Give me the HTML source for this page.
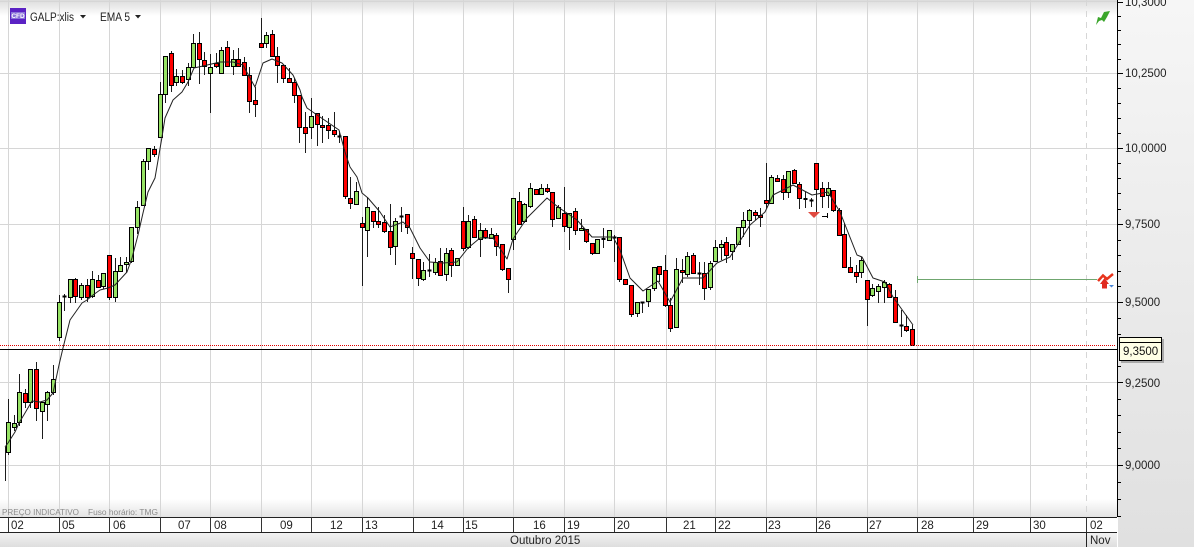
<!DOCTYPE html>
<html><head><meta charset="utf-8"><style>
html,body{margin:0;padding:0;background:#fff;width:1194px;height:547px;overflow:hidden}
svg{display:block;font-family:"Liberation Sans",sans-serif}
</style></head><body>
<svg width="1194" height="547" viewBox="0 0 1194 547" xmlns="http://www.w3.org/2000/svg">
<defs>
<linearGradient id="t" x1="0" y1="0" x2="0" y2="1"><stop offset="0" stop-color="#dcdcdc"/><stop offset="1" stop-color="#fff"/></linearGradient>
<linearGradient id="b" x1="0" y1="0" x2="0" y2="1"><stop offset="0" stop-color="#fff"/><stop offset="1" stop-color="#e4e4e4"/></linearGradient>
<linearGradient id="a" x1="0" y1="0" x2="0" y2="1"><stop offset="0" stop-color="#f6f6f6"/><stop offset="1" stop-color="#e0e0e0"/></linearGradient>
<linearGradient id="m" x1="0" y1="0" x2="0" y2="1"><stop offset="0" stop-color="#f2f2f2"/><stop offset="1" stop-color="#dedede"/></linearGradient>
</defs>
<rect width="1194" height="547" fill="#fff"/>
<rect x="1118" width="76" height="547" fill="url(#a)"/>
<rect width="1117" height="16" fill="url(#t)"/>
<rect y="499" width="1117" height="18" fill="url(#b)"/>
<g stroke="#d6d6d6" stroke-width="1" fill="none">
<path d="M0 1.5H1117M0 73.5H1117M0 148.5H1117M0 224.5H1117M0 302.5H1117M0 382.5H1117M0 465.5H1117"/>
<path d="M8.5 0V517M59.5 0V517M109.5 0V517M160.5 0V517M210.5 0V517M261.5 0V517M311.5 0V517M362.5 0V517M413.5 0V517M463.5 0V517M513.5 0V517M564.5 0V517M614.5 0V517M666.5 0V517M715.5 0V517M766.5 0V517M816.5 0V517M867.5 0V517M917.5 0V517M973.5 0V517M1030.5 0V517"/>
<path d="M1086.5 0V517" stroke-dasharray="6 5"/>
</g>
<path fill="none" stroke="#1c1c1c" stroke-width="1" d="M8.5 399V455M5.5 447V481M14.5 415V431M19.5 374V426M25.5 389V408M30.5 369V408M36.5 362V421M42.5 402V439M47.5 391V421M53.5 365V395M59.5 295V341M64.5 294V311M70.5 279V303M75.5 278V303M81.5 283V300M87.5 279V302M92.5 271V298M98.5 275V287M103.5 273V289M109.5 255V300M115.5 258V302M120.5 257V271M126.5 257V273M131.5 227V263M137.5 201V234M143.5 159V205M148.5 148V170M154.5 146V157M160.5 82V137M165.5 56V103M171.5 51V92M176.5 69V86M182.5 70V84M188.5 63V86M193.5 34V67M199.5 32V84M204.5 52V75M210.5 54V113M216.5 53V68M221.5 47V73M227.5 41V67M233.5 50V75M238.5 48V66M244.5 57V75M249.5 67V113M255.5 87V117M261.5 18V48M266.5 32V48M272.5 30V56M277.5 47V83M283.5 65V83M289.5 68V83M294.5 78V103M299.5 95V143M305.5 112V153M311.5 98V139M317.5 113V146M322.5 116V143M328.5 118V139M334.5 112V137M339.5 131V143M345.5 136V199M350.5 177V209M356.5 182V204M362.5 217V286M367.5 197V257M373.5 211V228M378.5 207V228M384.5 215V233M390.5 204V255M395.5 218V265M401.5 207V232M407.5 214V234M412.5 247V279M418.5 259V286M423.5 262V281M429.5 254V277M435.5 258V275M440.5 248V275M446.5 248V281M451.5 248V277M457.5 258V265M463.5 207V251M468.5 215V249M474.5 216V237M480.5 223V257M485.5 228V239M491.5 228V238M496.5 233V256M502.5 244V271M508.5 268V293M513.5 198V250M519.5 192V224M524.5 203V223M530.5 183V208M536.5 189V194M541.5 184V194M547.5 184V193M552.5 192V227M558.5 205V218M564.5 187V232M569.5 213V250M575.5 208V235M581.5 219V230M586.5 229V243M592.5 243V255M597.5 239V253M603.5 228V248M609.5 230V241M614.5 235V262M619.5 237V282M625.5 279V284M631.5 285V317M637.5 302V317M642.5 302V313M648.5 289V307M654.5 267V291M659.5 266V282M665.5 255V307M670.5 298V332M676.5 258V327M682.5 259V283M687.5 252V277M693.5 253V274M699.5 262V285M704.5 262V300M710.5 261V290M715.5 240V261M721.5 240V260M726.5 237V263M732.5 244V260M738.5 227V245M743.5 212V237M749.5 209V247M755.5 210V220M760.5 208V227M766.5 163V209M771.5 175V203M777.5 175V181M783.5 175V200M788.5 171V198M794.5 169V183M799.5 182V209M805.5 192V208M811.5 198V207M816.5 163V212M822.5 182V208M828.5 182V208M833.5 190V212M839.5 208V235M844.5 223V267M850.5 257V272M856.5 265V283M861.5 257V278M867.5 280V326M872.5 284V297M878.5 284V303M884.5 280V303M889.5 283V298M895.5 290V322M901.5 310V337M906.5 315V332M912.5 325V345"/>
<path fill="none" stroke="#000" stroke-width="2" d="M62.5 296.500h4M337.500 136.500h4M399.500 216.500h4M427.500 270.500h4M601.500 239h4M612.500 237.500h4M640.500 302.500h4M697.500 273.500h4M803.500 199h4M809.500 200.500h4M899.500 325.500h4"/>
<path fill="#96e264" stroke="#000" stroke-width="1" d="M6.5 422.5h4v30h-4zM12.5 423.5h4v4h-4zM17.5 392.5h4v30h-4zM28.5 369.5h4v33h-4zM40.5 402.5h4v9h-4zM45.5 392.5h4v12h-4zM51.5 379.5h4v13h-4zM57.5 302.5h4v35h-4zM68.5 279.5h4v18h-4zM79.5 285.5h4v12h-4zM90.5 279.5h4v17h-4zM101.5 273.5h4v13h-4zM113.5 271.5h4v26h-4zM118.5 265.5h4v6h-4zM124.5 262.5h4v2h-4zM129.5 227.5h4v34h-4zM135.5 207.5h4v20h-4zM141.5 161.5h4v44h-4zM146.5 148.5h4v13h-4zM158.5 94.5h4v43h-4zM163.5 56.5h4v38h-4zM174.5 76.5h4v6h-4zM186.5 67.5h4v12h-4zM191.5 43.5h4v24h-4zM208.5 67.5h4v6h-4zM219.5 50.5h4v23h-4zM231.5 59.5h4v7h-4zM264.5 35.5h4v8h-4zM309.5 116.5h4v11h-4zM354.5 191.5h4v13h-4zM365.5 207.5h4v23h-4zM393.5 221.5h4v25h-4zM421.5 270.5h4v9h-4zM433.5 262.5h4v10h-4zM444.5 253.5h4v21h-4zM455.5 258.5h4v7h-4zM466.5 221.5h4v26h-4zM478.5 230.5h4v9h-4zM489.5 234.5h4v4h-4zM511.5 198.5h4v41h-4zM522.5 204.5h4v17h-4zM528.5 188.5h4v18h-4zM539.5 188.5h4v6h-4zM556.5 207.5h4v11h-4zM567.5 213.5h4v14h-4zM579.5 228.5h4v2h-4zM595.5 239.5h4v14h-4zM607.5 230.5h4v10h-4zM635.5 302.5h4v11h-4zM646.5 289.5h4v12h-4zM652.5 267.5h4v21h-4zM674.5 269.5h4v58h-4zM685.5 256.5h4v18h-4zM708.5 263.5h4v24h-4zM713.5 247.5h4v14h-4zM719.5 244.5h4v3h-4zM730.5 244.5h4v7h-4zM736.5 227.5h4v17h-4zM741.5 220.5h4v7h-4zM747.5 210.5h4v10h-4zM769.5 177.5h4v26h-4zM786.5 171.5h4v21h-4zM826.5 188.5h4v7h-4zM859.5 260.5h4v12h-4zM870.5 288.5h4v7h-4zM876.5 286.5h4v5h-4zM882.5 282.5h4v5h-4z"/>
<path fill="#f00" stroke="#000" stroke-width="1" d="M23.5 393.5h4v9h-4zM34.5 369.5h4v39h-4zM73.5 279.5h4v17h-4zM85.5 285.5h4v12h-4zM96.5 280.5h4v7h-4zM107.5 255.5h4v42h-4zM152.5 149.5h4v5h-4zM169.5 53.5h4v32h-4zM180.5 76.5h4v6h-4zM197.5 43.5h4v16h-4zM202.5 60.5h4v6h-4zM214.5 63.5h4v3h-4zM225.5 47.5h4v19h-4zM236.5 59.5h4v7h-4zM242.5 62.5h4v13h-4zM247.5 75.5h4v26h-4zM253.5 100.5h4v4h-4zM259.5 43.5h4v4h-4zM270.5 34.5h4v22h-4zM275.5 56.5h4v9h-4zM281.5 65.5h4v13h-4zM287.5 78.5h4v4h-4zM292.5 82.5h4v13h-4zM297.5 95.5h4v32h-4zM303.5 127.5h4v6h-4zM315.5 113.5h4v11h-4zM320.5 125.5h4v2h-4zM326.5 125.5h4v5h-4zM332.5 130.5h4v4h-4zM343.5 136.5h4v60h-4zM348.5 198.5h4v5h-4zM360.5 223.5h4v4h-4zM371.5 211.5h4v10h-4zM376.5 221.5h4v3h-4zM382.5 222.5h4v9h-4zM388.5 231.5h4v16h-4zM405.5 214.5h4v13h-4zM410.5 253.5h4v5h-4zM416.5 259.5h4v19h-4zM438.5 261.5h4v14h-4zM449.5 250.5h4v15h-4zM461.5 221.5h4v27h-4zM472.5 219.5h4v18h-4zM483.5 230.5h4v7h-4zM494.5 235.5h4v11h-4zM500.5 244.5h4v25h-4zM506.5 268.5h4v11h-4zM517.5 201.5h4v23h-4zM534.5 189.5h4v5h-4zM545.5 188.5h4v3h-4zM550.5 192.5h4v27h-4zM562.5 213.5h4v13h-4zM573.5 211.5h4v19h-4zM584.5 229.5h4v12h-4zM590.5 243.5h4v10h-4zM617.5 237.5h4v42h-4zM623.5 279.5h4v5h-4zM629.5 285.5h4v29h-4zM657.5 266.5h4v8h-4zM663.5 270.5h4v35h-4zM668.5 305.5h4v23h-4zM680.5 270.5h4v2h-4zM691.5 255.5h4v18h-4zM702.5 273.5h4v15h-4zM724.5 242.5h4v13h-4zM753.5 212.5h4v3h-4zM758.5 215.5h4v2h-4zM764.5 200.5h4v3h-4zM775.5 178.5h4v3h-4zM781.5 179.5h4v13h-4zM792.5 170.5h4v13h-4zM797.5 184.5h4v14h-4zM814.5 163.5h4v26h-4zM820.5 188.5h4v8h-4zM831.5 190.5h4v20h-4zM837.5 210.5h4v25h-4zM842.5 234.5h4v33h-4zM848.5 267.5h4v5h-4zM854.5 272.5h4v4h-4zM865.5 280.5h4v19h-4zM887.5 284.5h4v13h-4zM893.5 297.5h4v25h-4zM904.5 326.5h4v4h-4zM910.5 329.5h4v16h-4z"/>
<path fill="none" stroke="#222" stroke-width="1" stroke-linejoin="round" d="M5 447L8 443L15 432L19 423L25 413L32 401L40 402L47 400L53 393L59 365L63 348L70 320L82 303L87 300L93 295L100 290L108 288L115 285L127 272L132 258L138 235L143 213L148 192L155 178L162 137L165 118L173 100L182 92L188 82L194 68L203 66L220 62L233 62L243 65L250 78L255 87L263 63L272 59L282 63L293 75L300 90L302 97L307 108L320 117L339 130L345 152L350 167L357 177L362 193L368 198L380 212L390 227L403 222L410 228L420 248L430 262L443 263L457 262L468 248L480 238L493 238L507 259L513 239L527 218L547 198L558 207L577 220L592 237L613 237L620 250L630 278L643 291L658 281L670 302L683 278L703 278L717 263L730 257L750 225L765 212L773 195L793 185L812 195L828 192L840 212L857 255L862 257L873 278L885 282L893 297L913 325"/>
<path d="M808 212h12l-6 6z" fill="#e04a40"/>
<path d="M822 216.500h6M827.500 213v5" stroke="#000" fill="none"/>
<path d="M917 279.500H1097M917.500 276v7" stroke="#6fa66f" fill="none"/>
<path d="M0 345.500H1116" stroke="#e00000" stroke-dasharray="1 1" fill="none"/>
<path d="M0 349.500H1117" stroke="#000" fill="none"/>
<path d="M1117.500 0V517" stroke="#000" fill="none"/>
<path stroke="#000" fill="none" d="M1117 2.500h6M1117 16.500h4M1117 30.500h4M1117 44.500h4M1117 59.500h4M1117 73.500h6M1117 88.500h4M1117 103.500h4M1117 118.500h4M1117 133.500h4M1117 148.500h6M1117 163.500h4M1117 178.500h4M1117 193.500h4M1117 209.500h4M1117 224.500h6M1117 240.500h4M1117 255.500h4M1117 271.500h4M1117 286.500h4M1117 302.500h6M1117 318.500h4M1117 334.500h4M1117 366.500h4M1117 382.500h6M1117 399.500h4M1117 415.500h4M1117 432.500h4M1117 448.500h4M1117 465.500h6M1117 482.500h4M1117 499.500h4M1117 516.500h4"/>
<g font-size="11.5" fill="#222">
<text x="1125" y="6">10,3000</text>
<text x="1125" y="77">10,2500</text>
<text x="1125" y="152">10,0000</text>
<text x="1125" y="228">9,7500</text>
<text x="1125" y="306">9,5000</text>
<text x="1125" y="387">9,2500</text>
<text x="1125" y="469">9,0000</text>
</g>
<rect x="1121" y="339" width="43" height="24" fill="#777" opacity=".55"/>
<rect x="1119.500" y="337.500" width="42" height="23" fill="#ffffe6" stroke="#000"/>
<path d="M1120 342.500h41" stroke="#000"/>
<text x="1123" y="355" font-size="11.5" fill="#111">9,3500</text>
<rect y="517" width="1117" height="15" fill="#fff"/>
<rect y="533" width="1117" height="14" fill="url(#m)"/>
<path d="M0 517.500H1117M0 532.500H1117M1086.500 532V547" stroke="#222" fill="none"/>
<path stroke="#333" fill="none" d="M8.500 517v15M59.500 517v15M109.500 517v15M160.500 517v15M210.500 517v15M261.500 517v15M311.500 517v15M362.500 517v15M413.500 517v15M463.500 517v15M513.500 517v15M564.500 517v15M614.500 517v15M666.500 517v15M715.500 517v15M766.500 517v15M816.500 517v15M867.500 517v15M917.500 517v15M973.500 517v15M1030.500 517v15M1086.500 517v15"/>
<g font-size="11.5" fill="#222">
<text x="11" y="529">02</text><text x="62" y="529">05</text><text x="113" y="529">06</text><text x="178" y="529">07</text><text x="214" y="529">08</text><text x="280" y="529">09</text><text x="330" y="529">12</text><text x="365" y="529">13</text><text x="431" y="529">14</text><text x="465" y="529">15</text><text x="533" y="529">16</text><text x="567" y="529">19</text><text x="617" y="529">20</text><text x="683" y="529">21</text><text x="718" y="529">22</text><text x="768" y="529">23</text><text x="818" y="529">26</text><text x="869" y="529">27</text><text x="921" y="529">28</text><text x="976" y="529">29</text><text x="1033" y="529">30</text><text x="1090" y="529">02</text>
<text x="510" y="544">Outubro 2015</text><text x="1090" y="544">Nov</text>
</g>
<text x="2" y="515" font-size="8.5" fill="#8c8c8c" textLength="77" lengthAdjust="spacingAndGlyphs">PREÇO INDICATIVO</text>
<text x="88" y="515" font-size="8.5" fill="#8c8c8c" textLength="70" lengthAdjust="spacingAndGlyphs">Fuso horário: TMG</text>
<rect x="10" y="8" width="16" height="16" fill="#5b22c4"/>
<rect x="11" y="12" width="14" height="7" fill="#8a74d8"/>
<text x="18" y="18" font-size="6.5" font-weight="bold" fill="#fff" text-anchor="middle">CFD</text>
<text x="30" y="21" font-size="11.5" fill="#222" textLength="44" lengthAdjust="spacingAndGlyphs">GALP:xlis</text>
<path d="M80 15h6l-3 3.500z" fill="#222"/>
<text x="100" y="21" font-size="11.5" fill="#222" textLength="30" lengthAdjust="spacingAndGlyphs">EMA 5</text>
<path d="M135 15h6l-3 3.500z" fill="#222"/>
<path d="M1096 25L1098 17L1101 18L1104 12L1110 11L1107 17L1104 22L1102 20L1099 21z" fill="#3aa52a"/>
<path d="M1098 281L1103 275.500L1107 279L1113 274" fill="none" stroke="#e8341c" stroke-width="2.500"/>
<path d="M1100 284L1104.500 278L1109 284H1107V288.500H1102V284z" fill="#e02a20"/>
<path d="M1109 285h5l-2.500 2.500z" fill="#4a86d8"/>
</svg>
</body></html>
